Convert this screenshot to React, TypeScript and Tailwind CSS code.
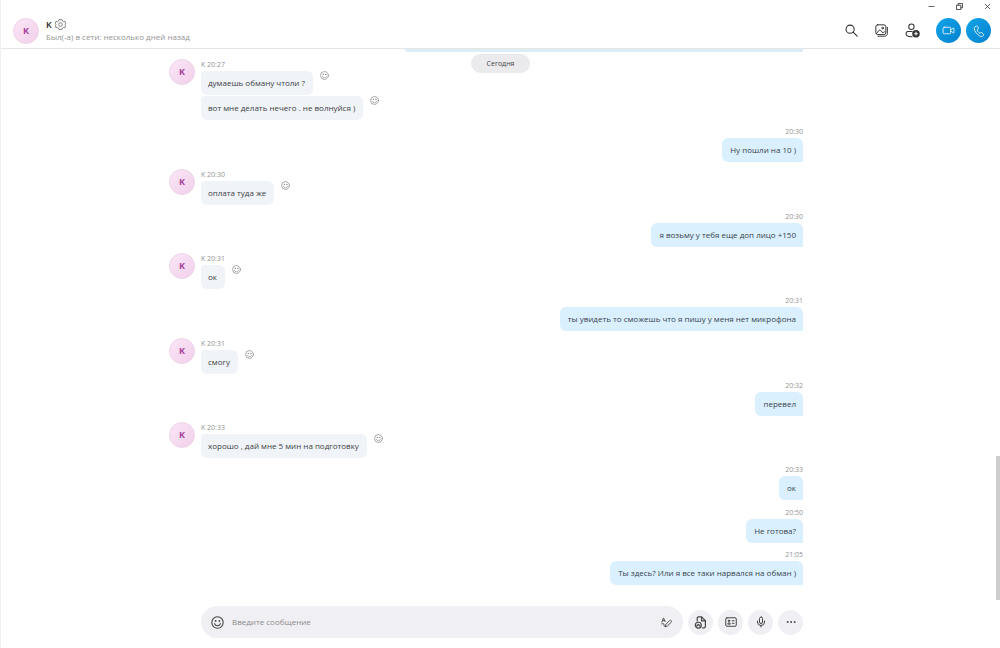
import React, { useState } from "react";
import { Minus, X, Video, Mic, MoreHorizontal } from "lucide-react";

type Message = {
  id: number;
  mine: boolean;
  time: string;
  lines: string[];
};

const messages: Message[] = [
  { id: 1, mine: false, time: "20:27", lines: ["думаешь обману чтоли ?", "вот мне делать нечего . не волнуйся )"] },
  { id: 2, mine: true, time: "20:30", lines: ["Ну пошли на 10 )"] },
  { id: 3, mine: false, time: "20:30", lines: ["оплата туда же"] },
  { id: 4, mine: true, time: "20:30", lines: ["я возьму у тебя еще доп лицо +150"] },
  { id: 5, mine: false, time: "20:31", lines: ["ок"] },
  { id: 6, mine: true, time: "20:31", lines: ["ты увидеть то сможешь что я пишу у меня нет микрофона"] },
  { id: 7, mine: false, time: "20:31", lines: ["смогу"] },
  { id: 8, mine: true, time: "20:32", lines: ["перевел"] },
  { id: 9, mine: false, time: "20:33", lines: ["хорошо , дай мне 5 мин на подготовку"] },
  { id: 10, mine: true, time: "20:33", lines: ["ок"] },
  { id: 11, mine: true, time: "20:50", lines: ["Не готова?"] },
  { id: 12, mine: true, time: "21:05", lines: ["Ты здесь? Или я все таки нарвался на обман )"] },
];

function Avatar() {
  return (
    <div className="flex size-[26px] shrink-0 items-center justify-center rounded-full border border-[#ecd3e8] bg-linear-to-br from-[#fce6f7] to-[#f1d0ea] text-[9px] font-bold text-[#a8429c]">
      K
    </div>
  );
}

function Smiley({ className }: { className: string }) {
  return (
    <svg viewBox="0 0 24 24" fill="none" stroke="currentColor" strokeWidth="2" strokeLinecap="round" className={className}>
      <circle cx="12" cy="12" r="10.5" />
      <path d="M6.5 14c1 2.600 3 4 5.500 4s4.500-1.400 5.500-4" />
      <circle cx="8.500" cy="9" r=".7" fill="currentColor" />
      <circle cx="15.500" cy="9" r=".7" fill="currentColor" />
    </svg>
  );
}

function GearIcon() {
  return (
    <svg viewBox="0 0 24 24" fill="none" stroke="currentColor" strokeWidth="2" strokeLinejoin="round" className="size-[11px]">
      <path d="M8.500 1.500h7l1 3.200 2.200 1.300 3.200-.8 1.600 5-2.200 1.800 2.200 2-1.800 5-3-.8-2.200 1.300-1 3h-7l-1-3-2.200-1.300-3 .8-1.800-5 2.200-2-2.200-1.800 1.600-5 3.200.8 2.200-1.300z" />
      <circle cx="12" cy="12" r="4" />
    </svg>
  );
}

function RestoreIcon() {
  return (
    <svg viewBox="0 0 8 8" fill="none" stroke="currentColor" strokeWidth="1" className="size-[7px]">
      <path d="M.5 2.500h5v5h-5z" />
      <path d="M2.500 2.500v-2h5v5h-2" />
    </svg>
  );
}

function SearchIcon() {
  return (
    <svg viewBox="0 0 24 24" fill="none" stroke="currentColor" strokeWidth="2" strokeLinecap="round" className="size-[13px]">
      <circle cx="9.500" cy="9.500" r="7.500" />
      <path d="m15 15 7.500 7.500" />
    </svg>
  );
}

function GalleryIcon() {
  return (
    <svg viewBox="0 0 24 24" fill="none" stroke="currentColor" strokeWidth="1.800" strokeLinecap="round" strokeLinejoin="round" className="size-[13px]">
      <rect x="1.500" y="1.500" width="18.500" height="18" rx="3.500" />
      <path d="M5.500 22.500h12.500c3 0 4.800-2 4.800-4.800V6" />
      <path d="m3 17.500 4.500-6c.8-.8 1.700-.8 2.500 0l4.500 5 2-1.800c.8-.7 1.500-.7 2.300 0" />
      <circle cx="14" cy="7.500" r="1.500" />
    </svg>
  );
}

function AddPersonIcon() {
  return (
    <svg viewBox="0 0 28 28" fill="none" stroke="currentColor" strokeWidth="1.900" strokeLinejoin="round" className="size-[15px]">
      <circle cx="12" cy="7" r="5" />
      <path d="M14 16H5.500C3.300 16 2 17.700 2 20c0 3.500 4 5.500 9.500 5.500H14" />
      <circle cx="20.500" cy="20" r="7" fill="currentColor" stroke="none" />
      <path d="M20.500 16.500v7M17 20h7" stroke="#fff" />
    </svg>
  );
}

function HandsetIcon() {
  return (
    <svg viewBox="0 0 24 24" fill="none" stroke="currentColor" strokeWidth="1.700" strokeLinejoin="round" className="size-3">
      <path d="M4 3.500 7 2c1-.4 2 0 2.400 1l1.300 3.200c.3.900.1 1.700-.6 2.300L8.300 10c.8 2.700 2.800 5.200 5.400 6.500l2.200-1.100c.8-.4 1.700-.3 2.300.3l2.600 2.500c.8.700.8 1.800.1 2.600l-1.400 1.300c-1.500 1.300-3.700 1.200-6.300-.2C7.500 18.800 3 12 2.500 7c-.1-1.500.3-2.800 1.500-3.500z" />
    </svg>
  );
}

function PenIcon() {
  return (
    <svg viewBox="0 0 24 24" fill="none" stroke="currentColor" strokeWidth="2" strokeLinecap="round" strokeLinejoin="round" className="size-[11px]">
      <path d="m2 11 3.500-9L9 10M3.500 8h4.500" />
      <path d="m9.500 20.500 1.500-5 7.500-7.500c1.200-1.200 2.800-1.200 3.800 0s1 2.500 0 3.600L14.500 19z" />
      <path d="M1.500 15c3-1.500 5.500-.5 5 1.500s-.5 4 3 4" />
    </svg>
  );
}

function FileIcon() {
  return (
    <svg viewBox="0 0 24 24" fill="none" stroke="currentColor" strokeWidth="2.200" strokeLinecap="round" strokeLinejoin="round" className="size-[13px]">
      <path d="M6 9V4c0-1.500 1-2.500 2.500-2.500H14L21 8.500v11c0 1.500-1 2.500-2.500 2.500H16" />
      <path d="M14 2v7h7" />
      <circle cx="8" cy="17" r="5.500" />
      <path d="m5 18.500 3-3 3 3" />
    </svg>
  );
}

function CardIcon() {
  return (
    <svg viewBox="0 0 24 24" fill="none" stroke="currentColor" strokeWidth="2" strokeLinecap="round" strokeLinejoin="round" className="size-3">
      <rect x="1.500" y="3.500" width="21" height="17" rx="2.500" />
      <circle cx="8" cy="9.500" r="1.500" fill="currentColor" />
      <path d="M5.500 15.500c0-3 5-3 5 0zM14.500 9.500H18M14.500 14.500H18" />
    </svg>
  );
}

function MessageGroup({ message }: { message: Message }) {
  if (message.mine) {
    return (
      <div className="flex flex-col items-end">
        <span className="text-[7px] leading-3 text-[#949494]">{message.time}</span>
        {message.lines.map((line) => (
          <p key={line} className="rounded-md rounded-br-none bg-[#daf0fe] pr-[7px] pl-2 text-[8px] leading-6 text-[#38434d]">
            {line}
          </p>
        ))}
      </div>
    );
  }

  return (
    <div className="flex items-start gap-1.5">
      <Avatar />
      <div className="flex flex-col items-start">
        <span className="text-[7px] leading-3 text-[#949494]">K {message.time}</span>
        <div className="flex flex-col gap-px">
          {message.lines.map((line) => (
            <div key={line} className="flex items-start gap-[7px]">
              <p className="rounded-md rounded-tl-sm bg-[#f0f4f8] pr-2 pl-[7px] text-[8px] leading-6 text-[#3c4043]">{line}</p>
              <button aria-label="Реакция" className="text-[#8c8c8c]">
                <Smiley className="size-[9px]" />
              </button>
            </div>
          ))}
        </div>
      </div>
    </div>
  );
}

export default function App() {
  const [draft, setDraft] = useState("");

  const roundButton = "flex size-[25px] shrink-0 items-center justify-center rounded-full bg-[#f0f0f4]";
  const callButton = "flex size-[25px] items-center justify-center rounded-full bg-linear-to-br from-[#12a5e8] to-[#0581cf] text-white";

  return (
    <div className="relative flex h-screen flex-col border-l border-[#f0f0f0] bg-white font-['Open_Sans','Noto_Sans',sans-serif] text-[#222]">
      {/* Window controls */}
      <div className="flex h-3 shrink-0 items-center justify-end gap-5 pr-2 text-[#333]">
        <button aria-label="Свернуть"><Minus className="size-[9px]" /></button>
        <button aria-label="Восстановить"><RestoreIcon /></button>
        <button aria-label="Закрыть"><X className="size-[9px]" /></button>
      </div>

      {/* Chat header */}
      <header className="flex h-[37px] shrink-0 items-center justify-between border-b border-[#e6e6e6] pt-px pr-[9px] pl-3">
        <div className="flex items-center gap-[7px]">
          <Avatar />
          <div>
            <div className="flex items-center gap-[3px]">
              <h1 className="text-[9px] leading-3 font-semibold">K</h1>
              <button aria-label="Настройки" className="text-[#777]"><GearIcon /></button>
            </div>
            <p className="text-[8px] leading-3 text-[#949494]">Был(-а) в сети: несколько дней назад</p>
          </div>
        </div>
        <div className="flex items-center gap-4">
          <div className="flex items-center gap-[17px] text-[#333]">
            <button aria-label="Поиск"><SearchIcon /></button>
            <button aria-label="Галерея"><GalleryIcon /></button>
            <button aria-label="Добавить"><AddPersonIcon /></button>
          </div>
          <div className="flex gap-[5px]">
            <button aria-label="Видеозвонок" className={callButton}><Video className="size-[13px]" strokeWidth={1.5} /></button>
            <button aria-label="Звонок" className={callButton}><HandsetIcon /></button>
          </div>
        </div>
      </header>

      <main className="relative flex min-h-0 flex-1 flex-col pr-[29px]">
        <span className="absolute top-[5px] left-1/2 -translate-x-1/2 rounded-full bg-[#ebebee] px-4 text-[7px] leading-[19px] text-[#444]">
          Сегодня
        </span>

        {/* Message list */}
        <div className="mx-auto flex min-h-0 w-full max-w-[634px] flex-1 flex-col">
          <div className="mb-[7px] h-[3px] w-[398px] shrink-0 self-end rounded-bl-md bg-[#dcedf6]" />
          <div className="flex flex-1 flex-col justify-between">
            {messages.map((message) => (
              <MessageGroup key={message.id} message={message} />
            ))}
          </div>
        </div>

        {/* Composer */}
        <form className="mx-auto mt-[21px] mb-2.5 flex w-full max-w-[634px] items-center gap-[5px] pl-8 text-[#444]" onSubmit={(e) => e.preventDefault()}>
          <div className="flex h-8 min-w-0 flex-1 items-center gap-2 rounded-full bg-[#f0f0f4] pr-[11px] pl-2.5">
            <button type="button" aria-label="Смайлики"><Smiley className="size-[13px]" /></button>
            <input
              type="text"
              aria-label="Сообщение"
              placeholder="Введите сообщение"
              value={draft}
              onChange={(e) => setDraft(e.target.value)}
              className="min-w-0 flex-1 bg-transparent text-[8px] outline-none placeholder:text-[#8a8a8a]"
            />
            <button type="button" aria-label="Форматирование"><PenIcon /></button>
          </div>
          <button type="button" aria-label="Файл" className={roundButton}><FileIcon /></button>
          <button type="button" aria-label="Контакт" className={roundButton}><CardIcon /></button>
          <button type="button" aria-label="Голосовое сообщение" className={roundButton}><Mic className="size-3" /></button>
          <button type="button" aria-label="Ещё" className={roundButton}><MoreHorizontal className="size-3" strokeWidth={2} /></button>
        </form>
      </main>

      {/* Scroll thumb */}
      <div className="absolute right-0 bottom-12 h-36 w-1 bg-[#cdcdcd]" />
    </div>
  );
}
